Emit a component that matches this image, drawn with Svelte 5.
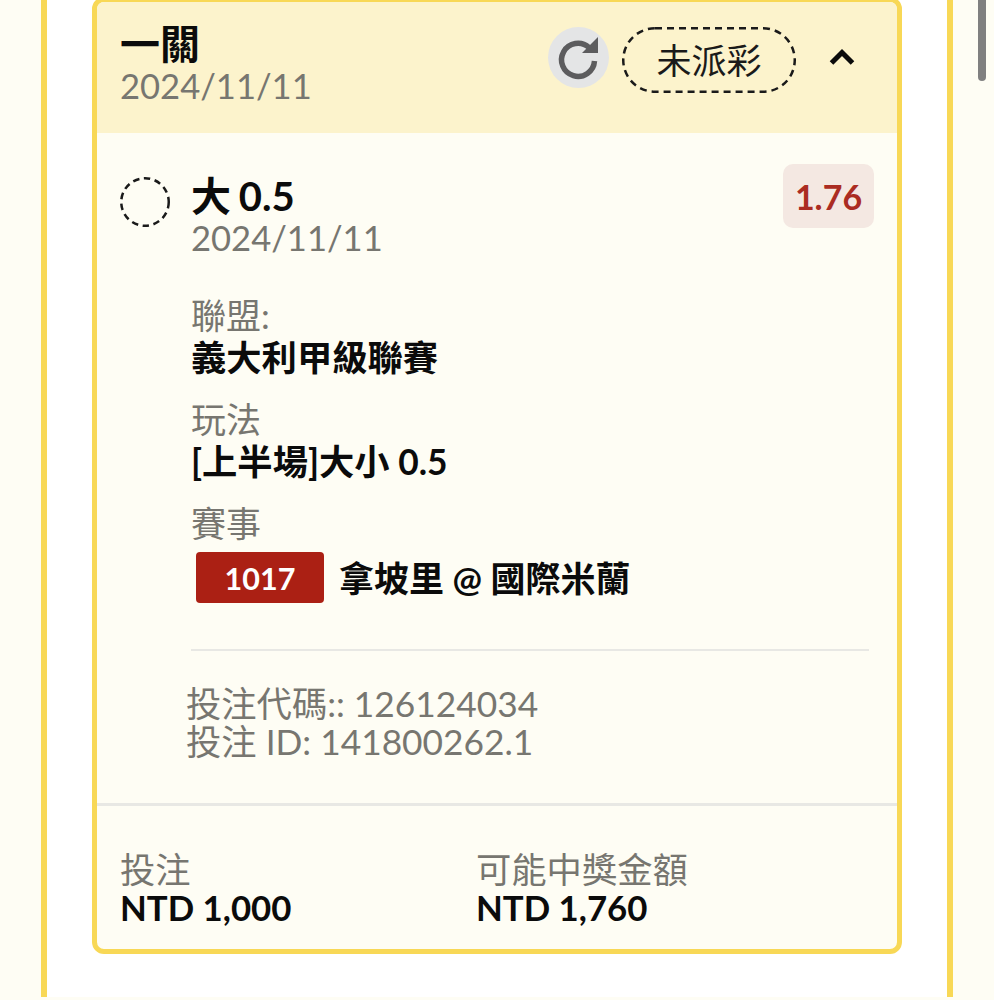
<script>
  const sections = [
    { label: '聯盟:', value: '義大利甲級聯賽' },
    { label: '玩法', value: '[上半場]大小 0.5' }
  ];
</script>

<div class="page">
  <div class="panel">
    <div class="card">
      <header class="head">
        <div class="titles">
          <div class="title">一關</div>
          <div class="date">2024/11/11</div>
        </div>
        <div class="actions">
          <div class="refresh">
            <svg viewBox="0 0 61 61" width="61" height="61" aria-hidden="true">
              <path d="M46.5 34A16.5 16.5 0 1 1 41 20.5" fill="none" stroke="#5c5c5e" stroke-width="5.5"/>
              <path d="M50 10V26H34Z" fill="#5c5c5e"/>
            </svg>
          </div>
          <div class="status">
            <svg class="dash" viewBox="0 0 174 66" width="174" height="66" aria-hidden="true">
              <rect x="1.25" y="1.25" width="171.5" height="63.5" rx="31.75" fill="none" stroke="#1a1a1a" stroke-width="2.5" stroke-dasharray="7 5"/>
            </svg>
            未派彩
          </div>
          <svg class="chev" viewBox="0 0 26 20" width="26" height="20" aria-hidden="true">
            <path d="M2.5 16 L13 5.5 L23.5 16" fill="none" stroke="#0b0b0b" stroke-width="5"/>
          </svg>
        </div>
      </header>

      <section class="body">
        <div class="pick">
          <svg class="dot" viewBox="0 0 50 50" width="50" height="50" aria-hidden="true">
            <circle cx="25" cy="25" r="23.75" fill="none" stroke="#1a1a1a" stroke-width="2.5" stroke-dasharray="6.5 4.5"/>
          </svg>
          <div class="pick-text">
            <div class="pick-name">大 0.5</div>
            <div class="date">2024/11/11</div>
          </div>
          <div class="odds">1.76</div>
        </div>

        <div class="details">
          {#each sections as s}
            <div class="detail">
              <div class="label">{s.label}</div>
              <div class="value">{s.value}</div>
            </div>
          {/each}
          <div class="detail">
            <div class="label">賽事</div>
            <div class="match">
              <span class="code">1017</span>
              <span class="value team">拿坡里 @ 國際米蘭</span>
            </div>
          </div>
        </div>

        <div class="ids">
          <div>投注代碼:: 126124034</div>
          <div>投注 ID: 141800262.1</div>
        </div>
      </section>

      <footer class="foot">
        <div class="col">
          <div class="foot-label">投注</div>
          <div class="foot-value">NTD 1,000</div>
        </div>
        <div class="col">
          <div class="foot-label">可能中獎金額</div>
          <div class="foot-value">NTD 1,760</div>
        </div>
      </footer>
    </div>
  </div>
  <div class="scroll"></div>
</div>

<style>
  :global(body) {
    margin: 0;
    background: #fefdf4;
  }
  .page {
    position: relative;
    height: 1000px;
    overflow: hidden;
    font-family: Lato, "Noto Sans CJK TC", sans-serif;
    color: #0b0b0b;
  }
  .panel {
    margin-left: 41px;
    width: 912px;
    height: 1000px;
    box-sizing: border-box;
    background: #fff;
    border-left: 6px solid #f8d856;
    border-right: 6px solid #f8d856;
    padding: 0 45px;
  }
  .card {
    box-sizing: border-box;
    width: 810px;
    height: 957px;
    margin-top: -3px;
    border: 5px solid #f8d856;
    border-radius: 12px;
    background: #fefdf4;
    overflow: hidden;
  }
  .head {
    height: 131px;
    box-sizing: border-box;
    background: #fcf3cc;
    padding: 20px 24px 0 23px;
    display: flex;
    justify-content: space-between;
    align-items: flex-start;
  }
  .title {
    font-size: 40px;
    font-weight: 700;
    line-height: 45px;
  }
  .date {
    font-size: 34.6px;
    line-height: 38px;
    color: #777670;
  }
  .actions {
    display: flex;
    align-items: flex-start;
  }
  .refresh {
    width: 61px;
    height: 61px;
    margin-top: 5px;
    border-radius: 50%;
    background: #e4e5e6;
    flex: none;
  }
  .refresh svg {
    display: block;
  }
  .status {
    position: relative;
    box-sizing: border-box;
    margin: 5px 0 0 13px;
    padding-bottom: 3px;
    width: 174px;
    height: 66px;
    display: flex;
    align-items: center;
    justify-content: center;
    font-size: 35px;
    color: #1a1a1a;
  }
  .dash {
    position: absolute;
    inset: 0;
  }
  .chev {
    margin: 25px 18px 0 33px;
  }
  .body {
    padding: 31px 23px 0 23px;
    height: 673px;
    box-sizing: border-box;
    border-bottom: 3px solid #e8e8e4;
  }
  .pick {
    display: flex;
    align-items: flex-start;
  }
  .dot {
    margin-top: 13px;
    flex: none;
  }
  .pick-text {
    margin: 10px 0 0 21px;
    flex: 1;
  }
  .pick-name {
    font-size: 40px;
    font-weight: 700;
    line-height: 45px;
    word-spacing: -2px;
  }
  .odds {
    width: 91px;
    height: 64px;
    border-radius: 10px;
    background: #f4e8e2;
    color: #ab2c22;
    font-size: 34px;
    font-weight: 700;
    display: flex;
    align-items: center;
    justify-content: center;
  }
  .details {
    margin: 39px 0 0 71px;
    display: flex;
    flex-direction: column;
    gap: 18px;
  }
  .label {
    font-size: 35px;
    line-height: 38px;
    color: #777670;
  }
  .value {
    font-size: 35.3px;
    font-weight: 700;
    line-height: 48px;
  }
  .team {
    font-size: 35px;
  }
  .match {
    display: flex;
    align-items: center;
    margin-top: 10px;
  }
  .code {
    margin-left: 5px;
    width: 128px;
    height: 51px;
    border-radius: 4px;
    background: #ab2014;
    color: #fff;
    font-size: 30.5px;
    font-weight: 700;
    display: flex;
    align-items: center;
    justify-content: center;
    margin-right: 15px;
  }
  .ids {
    margin: 46px 0 0 66px;
    padding-top: 36px;
    font-size: 35.3px;
    line-height: 38px;
    color: #777670;
    position: relative;
  }
  .ids::before {
    content: "";
    position: absolute;
    top: 0;
    left: 5px;
    right: 5px;
    height: 2px;
    background: #e8e8e4;
  }
  .foot {
    padding: 45px 23px 0 23px;
    display: flex;
  }
  .col {
    width: 356px;
  }
  .foot-label {
    font-size: 35.3px;
    line-height: 38px;
    color: #777670;
  }
  .foot-value {
    font-size: 34.8px;
    font-weight: 700;
    line-height: 38px;
  }
  .scroll {
    position: absolute;
    top: -8px;
    left: 978px;
    width: 8px;
    height: 89px;
    border-radius: 4px;
    background: #808080;
  }
</style>
